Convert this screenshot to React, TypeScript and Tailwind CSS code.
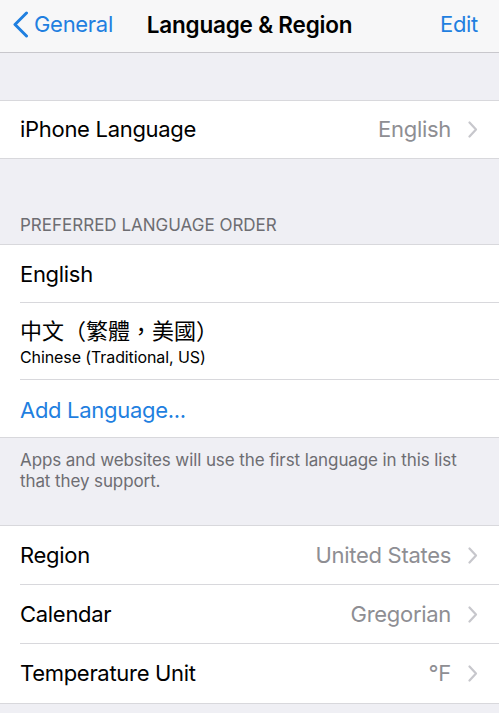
import React from "react";

const font = { fontFamily: 'Inter, "Noto Sans CJK TC", sans-serif' };

const Chevron = () => (
  <svg width="10" height="17" viewBox="0 0 10 17" className="ml-[17px] shrink-0">
    <path d="M1.5 1.5 L8 8.5 L1.5 15.5" fill="none" stroke="#c7c7cc" strokeWidth="2.2" strokeLinecap="round" strokeLinejoin="round" />
  </svg>
);

const Row = ({ label, value, last }: { label: string; value?: string; last?: boolean }) => (
  <div className="relative flex h-[59px] items-center pl-5 pr-[21px]">
    <span className="flex-1 text-[22px] tracking-[-0.3px] text-black">{label}</span>
    {value && <span className="text-[22px] tracking-[-0.3px] text-[#8e8e93]">{value}</span>}
    <Chevron />
    {!last && <div className="absolute bottom-0 left-5 right-0 h-px bg-[#d8d8dc]" />}
  </div>
);

export default function App() {
  return (
    <div className="h-[713px] w-[499px] overflow-hidden bg-[#efeff4]" style={font}>
      {/* Nav bar */}
      <div className="relative flex h-[53px] items-center border-b border-[#c8c7cc] bg-[#f7f7f8] pb-[3px]">
        <div className="flex items-center pl-3">
          <svg width="17" height="27" viewBox="0 0 17 27">
            <path d="M14.5 2 L3 13.5 L14.5 25" fill="none" stroke="#1f7fe0" strokeWidth="3" strokeLinecap="round" strokeLinejoin="round" />
          </svg>
          <span className="ml-[5px] text-[22px] tracking-[-0.3px] text-[#1f7fe0]">General</span>
        </div>
        <span className="pointer-events-none absolute left-0 right-0 text-center text-[22.5px] font-semibold tracking-[-0.2px] text-black">
          Language &amp; Region
        </span>
        <span className="ml-auto pr-[21px] text-[22px] tracking-[-0.3px] text-[#1f7fe0]">Edit</span>
      </div>

      <div className="h-[47px]" />

      {/* iPhone Language */}
      <div className="border-y border-[#d8d8dc] bg-white">
        <div className="flex h-[57px] items-center pl-5 pr-[21px]">
          <span className="flex-1 text-[22px] tracking-[-0.3px] text-black">iPhone Language</span>
          <span className="text-[22px] tracking-[-0.3px] text-[#8e8e93]">English</span>
          <Chevron />
        </div>
      </div>

      {/* Section header */}
      <div className="flex h-[85px] items-end pb-[6px] pl-5">
        <span className="text-[17px] text-[#6d6d72]">PREFERRED LANGUAGE ORDER</span>
      </div>

      {/* Preferred languages */}
      <div className="border-y border-[#d8d8dc] bg-white">
        <div className="relative flex h-[58px] items-center pl-5">
          <span className="text-[22px] tracking-[-0.3px] text-black">English</span>
          <div className="absolute bottom-0 left-5 right-0 h-px bg-[#d8d8dc]" />
        </div>
        <div className="relative flex h-[77px] flex-col justify-center pl-5 pt-[1px]">
          <span className="text-[22px] leading-[28px] text-black">中文（繁體，美國）</span>
          <span className="mt-[2px] text-[16px] leading-[20px] tracking-[-0.1px] text-black">Chinese (Traditional, US)</span>
          <div className="absolute bottom-0 left-5 right-0 h-px bg-[#d8d8dc]" />
        </div>
        <div className="flex h-[57px] items-center pl-5 pt-[3px]">
          <span className="text-[22px] tracking-[-0.3px] text-[#1f7fe0]">Add Language...</span>
        </div>
      </div>

      {/* Footer */}
      <div className="h-[87px] px-5 pt-[12px]">
        <p className="text-[17px] leading-[21px] tracking-[-0.1px] text-[#6d6d72]">
          Apps and websites will use the first language in this list that they support.
        </p>
      </div>

      {/* Region group */}
      <div className="border-y border-[#d8d8dc] bg-white">
        <Row label="Region" value="United States" />
        <Row label="Calendar" value="Gregorian" />
        <Row label="Temperature Unit" value="°F" last />
      </div>
    </div>
  );
}
